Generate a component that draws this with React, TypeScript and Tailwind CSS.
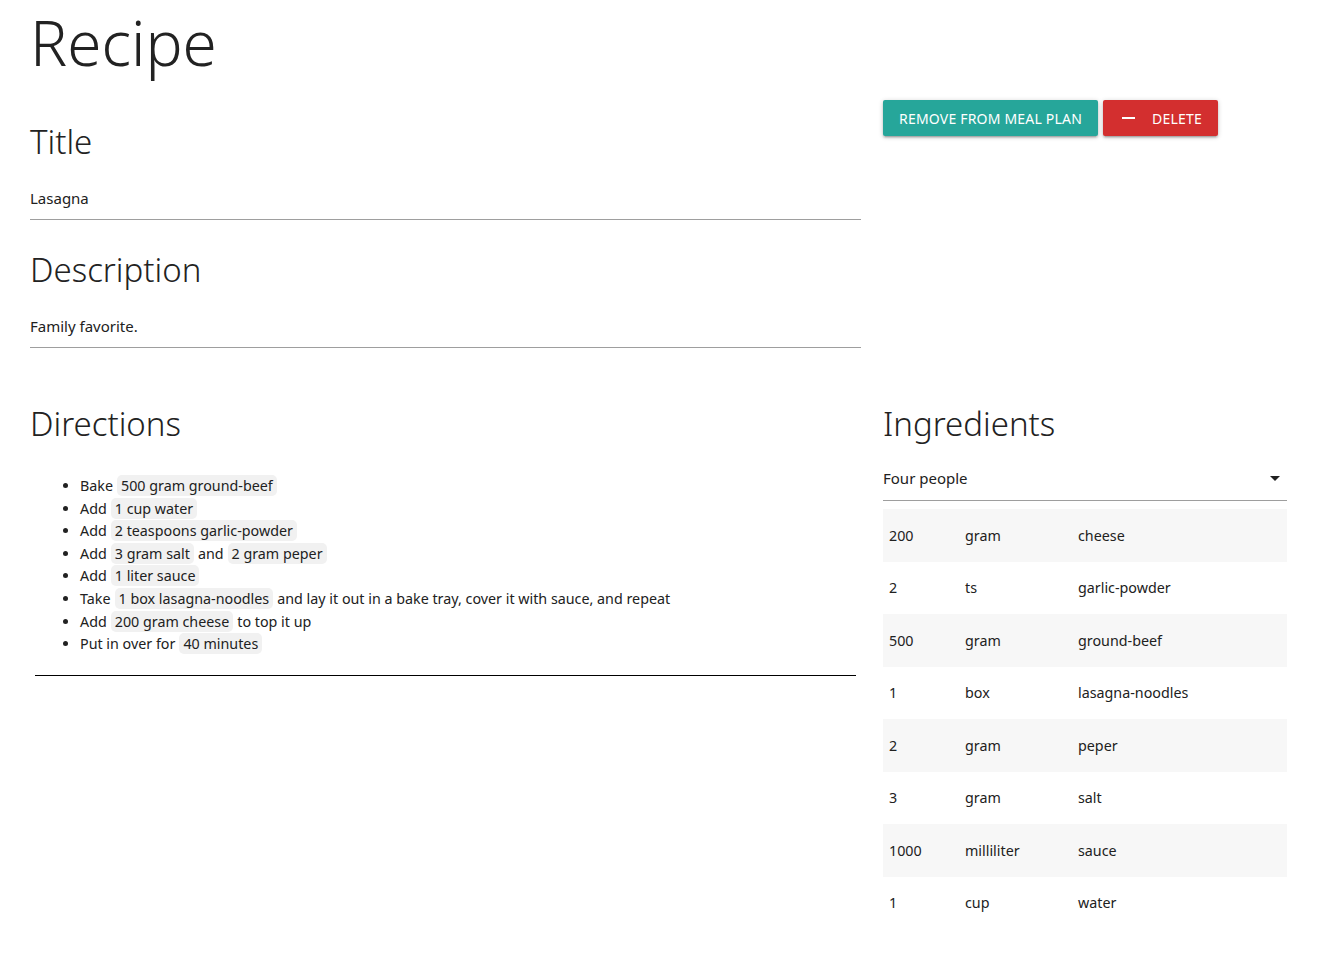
const ingredients = [
  { amount: '200', unit: 'gram', name: 'cheese' },
  { amount: '2', unit: 'ts', name: 'garlic-powder' },
  { amount: '500', unit: 'gram', name: 'ground-beef' },
  { amount: '1', unit: 'box', name: 'lasagna-noodles' },
  { amount: '2', unit: 'gram', name: 'peper' },
  { amount: '3', unit: 'gram', name: 'salt' },
  { amount: '1000', unit: 'milliliter', name: 'sauce' },
  { amount: '1', unit: 'cup', name: 'water' },
];

type Part = string | { chip: string };

const directions: Part[][] = [
  ['Bake', { chip: '500 gram ground-beef' }],
  ['Add', { chip: '1 cup water' }],
  ['Add', { chip: '2 teaspoons garlic-powder' }],
  ['Add', { chip: '3 gram salt' }, 'and', { chip: '2 gram peper' }],
  ['Add', { chip: '1 liter sauce' }],
  ['Take', { chip: '1 box lasagna-noodles' }, 'and lay it out in a bake tray, cover it with sauce, and repeat'],
  ['Add', { chip: '200 gram cheese' }, 'to top it up'],
  ['Put in over for', { chip: '40 minutes' }],
];

function Chip({ text }: { text: string }) {
  return <span className="mx-[4px] rounded-[5px] bg-[#f1f1f1] px-[4px] py-[1px]">{text}</span>;
}

const btnShadow = 'shadow-[0_2px_2px_0_rgba(0,0,0,0.14),0_3px_1px_-2px_rgba(0,0,0,0.12),0_1px_5px_0_rgba(0,0,0,0.2)]';

export default function App() {
  return (
    <div className="min-h-[955px] bg-white text-[15px] text-[#212121]" style={{ fontFamily: '"Noto Sans", "Open Sans", sans-serif' }}>
      <div className="px-[30px]">
        <h1 className="pt-[2px] text-[62px] leading-[80px] font-light text-[#222]">Recipe</h1>

        <div className="flex">
          {/* left column */}
          <div className="w-[831px]">
            <h4 className="mt-[38px] text-[33px] leading-[44px] font-light text-[#222]">Title</h4>
            <div className="mt-[23px] border-b border-[#9e9e9e] pb-[10px] leading-[22px]">Lasagna</div>

            <h4 className="mt-[28px] text-[33px] leading-[44px] font-light text-[#222]">Description</h4>
            <div className="mt-[23px] border-b border-[#9e9e9e] pb-[10px] leading-[22px]">Family favorite.</div>
          </div>

          {/* buttons */}
          <div className="ml-[22px] flex items-start gap-[5px] pt-[18px]">
            <button className={`h-[36px] rounded-[2px] bg-[#26a69a] px-[16px] text-[14px] tracking-[0.2px] text-white uppercase ${btnShadow}`}>
              Remove from meal plan
            </button>
            <button className={`flex h-[36px] items-center rounded-[2px] bg-[#d32f2f] pr-[16px] pl-[17px] text-[14px] tracking-[0.2px] text-white uppercase ${btnShadow}`}>
              <span className="mr-[17px] ml-[2px] inline-block h-[2px] w-[13px] bg-white" />
              Delete
            </button>
          </div>
        </div>

        <div className="mt-[54px] flex">
          {/* directions */}
          <div className="w-[831px]">
            <h4 className="text-[33px] leading-[44px] font-light text-[#222]">Directions</h4>
            <ul className="mt-[29px] ml-[50px] list-disc text-[14.3px] leading-[22.6px] marker:text-[#222]">
              {directions.map((parts, i) => (
                <li key={i}>
                  {parts.map((p, j) =>
                    typeof p === 'string' ? <span key={j}>{p}</span> : <Chip key={j} text={p.chip} />,
                  )}
                </li>
              ))}
            </ul>
            <div className="mx-[5px] mt-[19px] border-b border-black" />
          </div>

          {/* ingredients */}
          <div className="ml-[22px] w-[404px]">
            <h4 className="text-[33px] leading-[44px] font-light text-[#222]">Ingredients</h4>
            <div className="mt-[18px] flex h-[37px] items-center justify-between border-b border-[#9e9e9e] pb-[8px]">
              <span>Four people</span>
              <svg width="10" height="5" viewBox="0 0 10 5" className="mr-[7px]">
                <path d="M0 0 L10 0 L5 5 Z" fill="#212121" />
              </svg>
            </div>
            <table className="mt-[8px] w-full text-[14.3px]">
              <tbody>
                {ingredients.map((ing, i) => (
                  <tr key={i} className={i % 2 === 0 ? 'bg-[#f7f7f7]' : 'bg-white'}>
                    <td className="h-[52.5px] w-[76px] pl-[6px]">{ing.amount}</td>
                    <td className="w-[113px] pl-[6px]">{ing.unit}</td>
                    <td className="pl-[6px]">{ing.name}</td>
                  </tr>
                ))}
              </tbody>
            </table>
          </div>
        </div>
      </div>
    </div>
  );
}
